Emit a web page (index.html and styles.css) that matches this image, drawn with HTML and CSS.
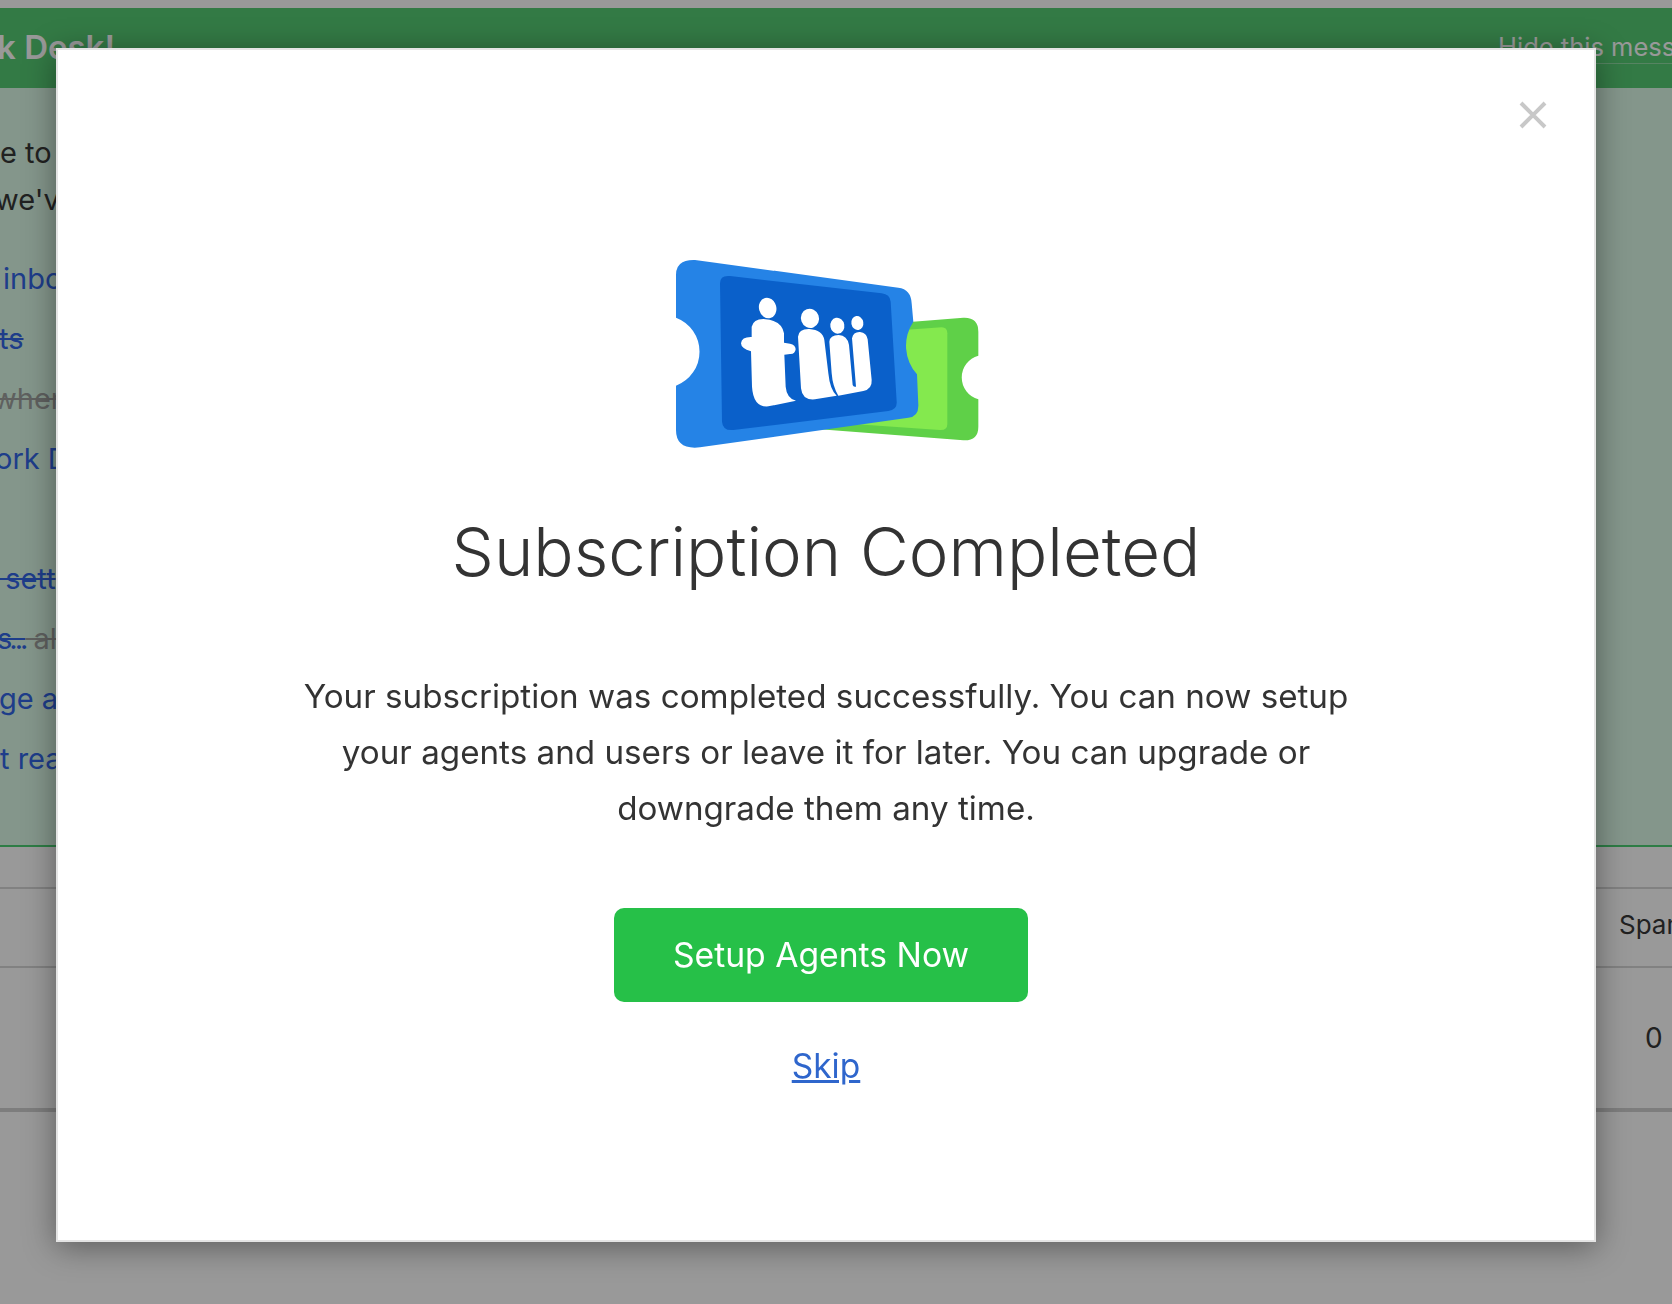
FILE: index.html
```html
<!DOCTYPE html>
<html lang="en">
<head>
<meta charset="utf-8">
<title>Subscription Completed</title>
<link rel="stylesheet" href="styles.css">
</head>
<body>
<div class="page">
  <div class="top-strip"></div>
  <header class="banner">
    <h2 class="banner-title">Welcome to Work Desk!</h2>
    <a class="banner-hide" href="#">Hide this message</a>
  </header>
  <section class="intro">
    <p class="line line-dark shift-a">e to</p>
    <p class="line line-dark shift-b">we've</p>
    <ul class="tasks">
      <li class="task"><a class="link shift-c" href="#">inbox</a></li>
      <li class="task"><a class="link done shift-d" href="#">ts</a></li>
      <li class="task"><span class="muted done shift-j">wher</span></li>
      <li class="task"><a class="link shift-e" href="#">ork D</a></li>
    </ul>
    <ul class="tasks tasks-second">
      <li class="task"><a class="link done shift-f" href="#">&nbsp;sett</a></li>
      <li class="task"><a class="link done shift-g tight" href="#">s...</a><span class="muted done"> al</span></li>
      <li class="task"><a class="link shift-h" href="#">ge a</a></li>
      <li class="task"><a class="link shift-i" href="#">t rea</a></li>
    </ul>
  </section>
  <section class="stats">
    <div class="stats-head"><span class="stat-cell">Spam</span></div>
    <div class="stats-body"><span class="stat-cell stat-num">0</span></div>
  </section>
</div>

<div class="overlay"></div>

<main class="modal">
  <button class="close" type="button" aria-label="Close">
    <svg class="close-icon" viewBox="0 0 30 30"><path d="M3 3 27 27M27 3 3 27"/></svg>
  </button>
  <svg class="logo" viewBox="0 0 1080 660" aria-label="Logo">
    <path fill="#5fd048" d="M800 247 970 233Q1015 231 1015 275V347A68 68 0 0 0 1015 478V560Q1015 603 970 601L540 568Z"/>
    <path fill="#84e94e" d="M790 270 905 262Q922 262 922 280V552Q922 571 900 570L640 552Z"/>
    <path fill="#2583e6" d="M108 105Q108 58 165 60L775 143Q813 148 815 190L820 245A129 129 0 0 0 831 403L835 495Q836 530 805 533L180 622Q108 630 108 570V437A109 109 0 0 0 108 233Z"/>
    <path fill="#0a60ca" d="M240 130Q240 105 270 108L725 160Q750 163 752 185L770 485Q772 510 745 513L280 570Q248 573 246 545Z"/>
    <g fill="#fff">
      <ellipse cx="383" cy="204" rx="26" ry="31" transform="rotate(-15 383 204)"/>
      <path d="M335 260Q340 238 370 237Q425 240 432 280V308L450 311Q467 315 467 328Q465 343 450 342L433 344 437 440Q440 475 468 482L385 499Q340 503 336 440L333 334Q303 325 303 310Q305 290 335 291Z"/>
      <ellipse cx="510" cy="235" rx="27" ry="29" transform="rotate(-20 510 235)"/>
      <path d="M474 290Q476 266 508 267Q548 270 553 300L565 400Q570 450 590 467L525 478Q487 482 483 445Z"/>
      <ellipse cx="592" cy="257" rx="21" ry="24" transform="rotate(-10 592 257)"/>
      <ellipse cx="652" cy="249" rx="18" ry="21" transform="rotate(-10 652 249)"/>
      <path d="M568 305Q570 285 596 285Q622 286 627 315L638 435Q640 442 648 440L636 295Q640 275 660 276Q680 278 683 298L695 420Q697 447 670 453L595 467Q578 440 575 400Z"/>
    </g>
  </svg>
  <h1 class="title">Subscription Completed</h1>
  <p class="message">Your subscription was completed successfully. You can now setup<br>your agents and users or leave it for later. You can upgrade or<br>downgrade them any time.</p>
  <a class="cta" href="#">Setup Agents Now</a>
  <a class="skip" href="#">Skip</a>
</main>
</body>
</html>
```

FILE: styles.css
```css
* { box-sizing: border-box; }

html, body {
  margin: 0;
  height: 1304px;
  overflow: hidden;
  background: #fff;
  font-family: "Inter", "Lato", sans-serif;
}

.page {
  display: flex;
  flex-direction: column;
  height: 1304px;
  overflow: hidden;
}

.top-strip { height: 8px; background: #fff; flex: none; }

.banner {
  flex: none;
  height: 80px;
  background: #55cb73;
  display: flex;
  align-items: center;
  justify-content: space-between;
  color: #fff;
  white-space: nowrap;
  overflow: hidden;
}

.banner-title {
  margin: 0;
  width: 115px;
  display: flex;
  justify-content: flex-end;
  font-size: 33px;
  font-weight: 600;
  line-height: 1;
  padding-bottom: 2px;
}

.banner-hide {
  color: #fff;
  text-decoration: none;
  font-size: 25.5px;
  line-height: 32px;
  border-bottom: 1px solid rgba(255,255,255,.35);
  margin-right: -48px;
  margin-bottom: 2px;
}

.intro {
  flex: none;
  height: 759px;
  background: #dcfbe8;
  border-bottom: 2px solid #4bd074;
  padding-top: 41px;
  font-size: 29px;
  color: #373737;
  white-space: nowrap;
  overflow: hidden;
}

.line { margin: 0; line-height: 47px; }

.tasks { list-style: none; margin: 26px 0 0; padding: 0; }
.tasks-second { margin-top: 60px; }
.task { height: 60px; line-height: 60px; }

.link { color: #3366e6; text-decoration: none; }
.muted { color: #9ea19e; }
.done { text-decoration: line-through; }

.line-dark { display: block; }

.shift-a { margin-left: 0; }
.shift-b { margin-left: -5px; }
.shift-c { margin-left: 3px; }
.shift-d { margin-left: -1px; }
.shift-e { margin-left: -5px; }
.shift-f { margin-left: -3px; }
.shift-g { margin-left: -3px; }
.shift-h { margin-left: -1px; }
.shift-i { margin-left: 0; }
.shift-j { margin-left: -7px; }
.tight { letter-spacing: -3px; }

.task .link, .task .muted { display: inline-block; }
.task .muted { white-space: pre; }

.stats {
  flex: 1;
  background: #fff;
  font-size: 26px;
  color: #373737;
}

.stats-head {
  height: 121px;
  padding-top: 35px;
  border-bottom: 2px solid #d8d8d8;
  position: relative;
  display: flex;
  align-items: center;
  justify-content: flex-end;
}

.stats-head::before {
  content: "";
  position: absolute;
  left: 0;
  right: 0;
  top: 40px;
  height: 2px;
  background: #d8d8d8;
}

.stats-body {
  height: 144px;
  display: flex;
  align-items: center;
  justify-content: flex-end;
  border-bottom: 4px solid #d0d0d0;
}

.stat-cell {
  display: block;
  width: 53px;
  white-space: nowrap;
  overflow: hidden;
}

.stat-num { width: 27px; font-size: 28px; }

.overlay {
  position: fixed;
  inset: 0;
  background: rgba(0,0,0,.4);
}

.modal {
  position: absolute;
  left: 56px;
  top: 48px;
  width: 1540px;
  height: 1194px;
  background: #fff;
  background-clip: padding-box;
  border: 2px solid #e4e4e4;
  box-shadow: 0 5px 30px rgba(0,0,0,.4);
  display: flex;
  flex-direction: column;
  align-items: center;
  color: #333;
}

.close {
  position: absolute;
  right: 46px;
  top: 50px;
  width: 30px;
  height: 30px;
  padding: 0;
  border: 0;
  background: none;
}

.close-icon {
  display: block;
  width: 30px;
  height: 30px;
  fill: none;
  stroke: #c8c8c8;
  stroke-width: 4;
}

.logo {
  flex: none;
  width: 360px;
  height: 220px;
  margin: 190px 12px 0 0;
}

.title {
  margin: 50px 0 0;
  font-size: 67px;
  font-weight: 300;
  line-height: 84px;
  color: #333;
  white-space: nowrap;
}

.message {
  margin: 74px 0 0;
  font-size: 33.2px;
  line-height: 56px;
  text-align: center;
  white-space: nowrap;
  color: #333;
}

.cta {
  margin: 72px 10px 0 0;
  width: 414px;
  height: 94px;
  border-radius: 10px;
  background: #26c048;
  color: #fff;
  font-size: 33.7px;
  display: flex;
  align-items: center;
  justify-content: center;
  text-decoration: none;
  padding-bottom: 2px;
}

.skip {
  margin-top: 41px;
  font-size: 33.5px;
  line-height: 46px;
  color: #2f66cc;
  text-decoration: underline;
}
```
